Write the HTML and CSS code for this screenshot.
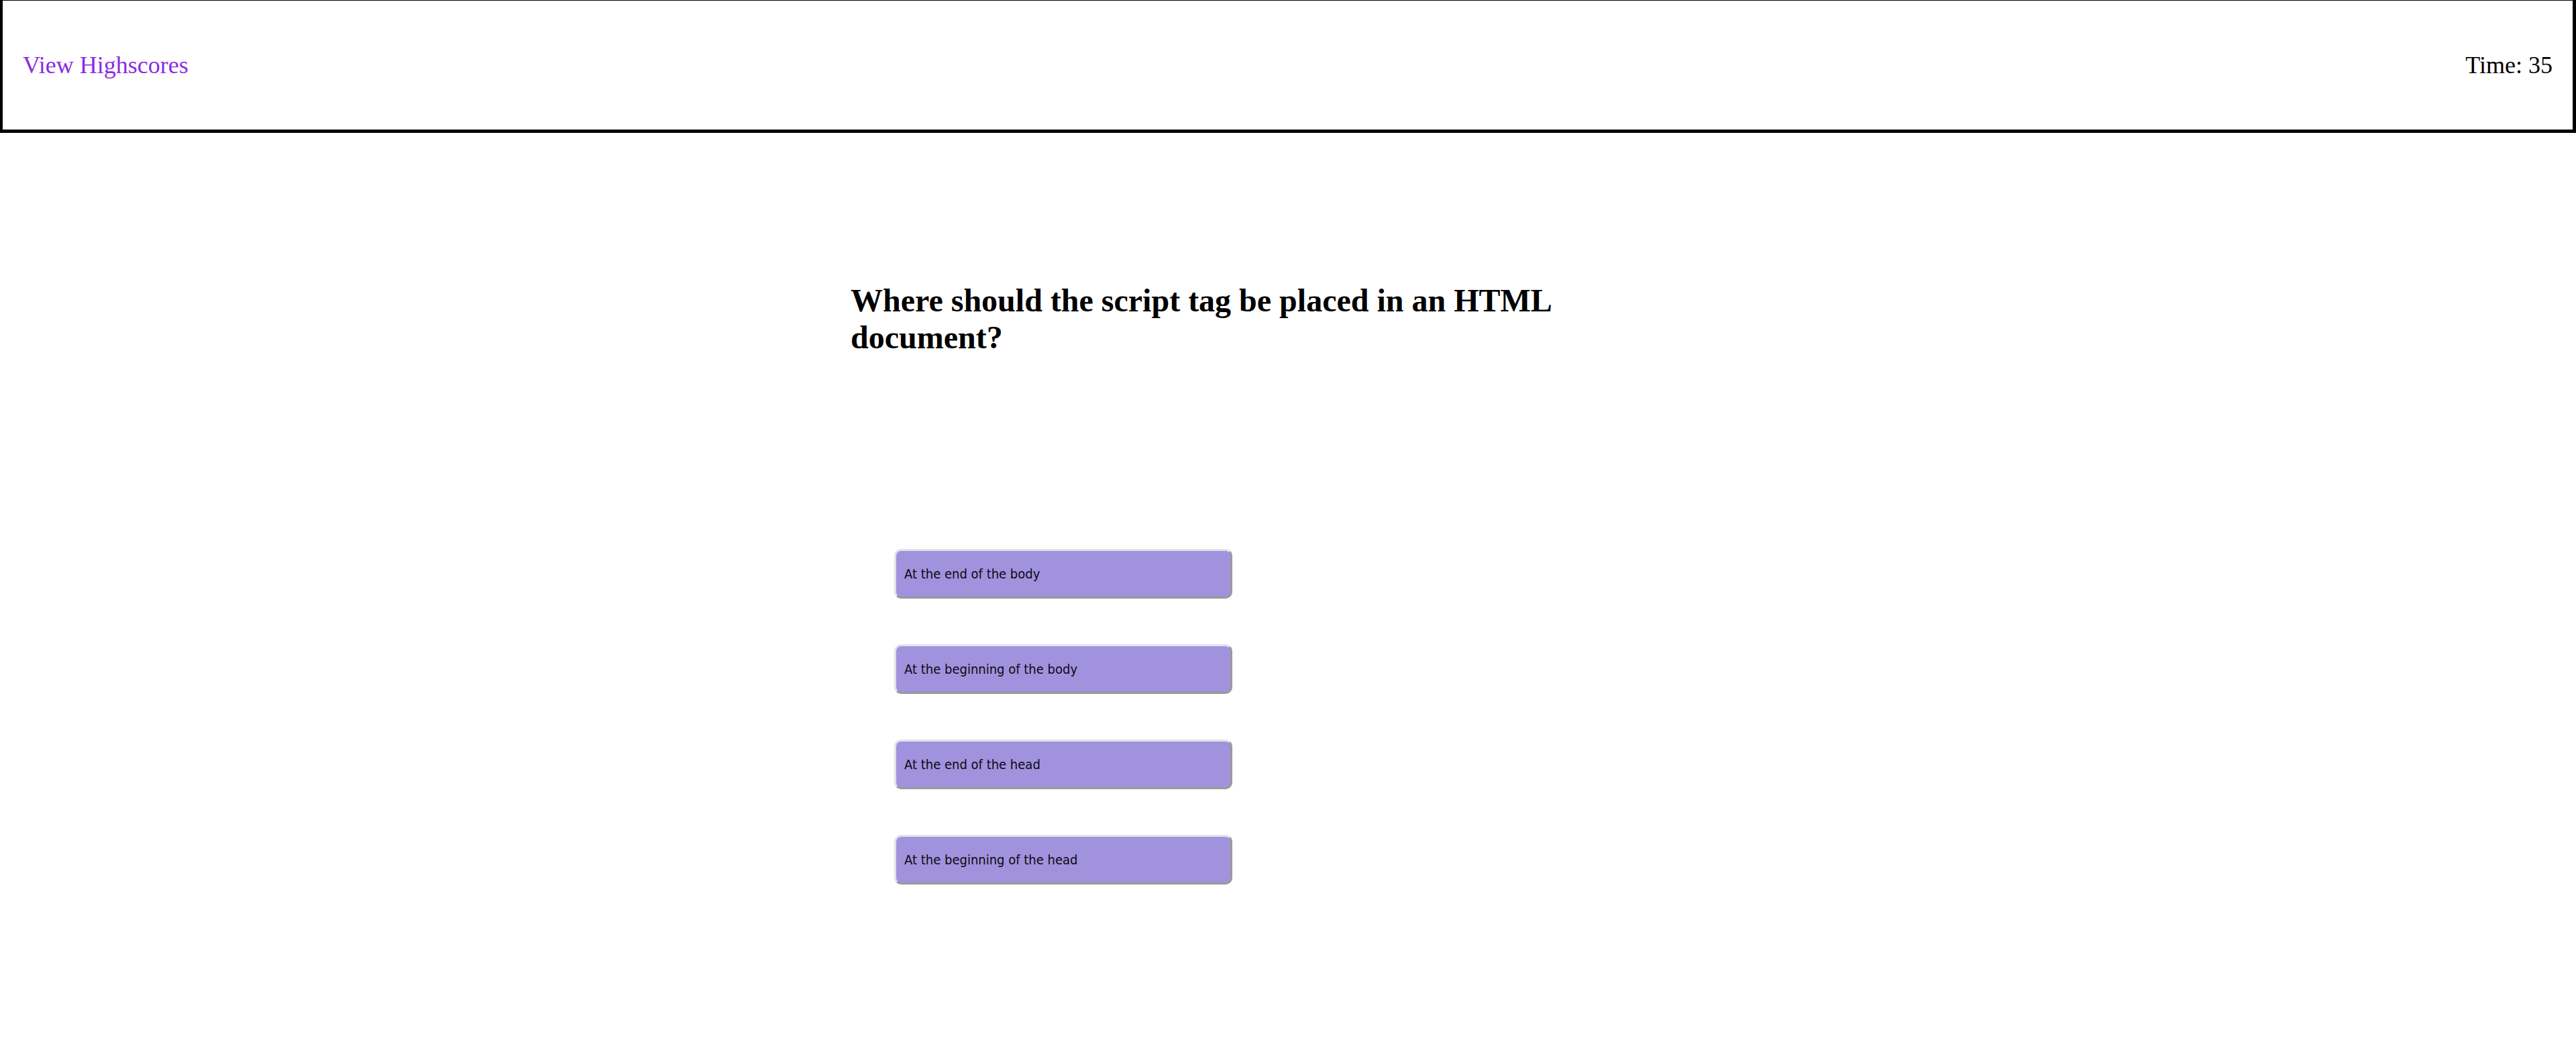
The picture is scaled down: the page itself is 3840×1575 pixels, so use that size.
FILE: index.html
```html
<!DOCTYPE html>
<html lang="en">
<head>
<meta charset="utf-8">
<title>Code Quiz</title>
<link rel="stylesheet" href="styles.css">
</head>
<body>
<header class="topbar">
  <a class="highscores" href="#">View Highscores</a>
  <div class="timer">Time: 35</div>
</header>
<main class="quiz">
  <h1 class="question">Where should the script tag be placed in an HTML document?</h1>
  <div class="choices">
    <button class="choice">At the end of the body</button>
    <button class="choice">At the beginning of the body</button>
    <button class="choice">At the end of the head</button>
    <button class="choice">At the beginning of the head</button>
  </div>
</main>
</body>
</html>
```
FILE: styles.css
```css
html, body {
  margin: 0;
  padding: 0;
  background: #fff;
  font-family: "Liberation Serif", "Times New Roman", serif;
  color: #000;
}

.topbar {
  display: flex;
  justify-content: space-between;
  align-items: center;
  padding: 75px 30px;
  border: 4px solid #000;
  border-top-width: 1px;
  border-bottom-width: 5px;
  border-right-width: 5px;
  font-size: 36px;
}

.highscores {
  color: #8a2be2;
  text-decoration: none;
}

.timer {
  color: #000;
}

.quiz {
  width: 1304px;
  margin: 0 auto;
  padding-top: 222px;
}

.question {
  max-width: 1100px;
  margin: 0;
  font-size: 48px;
  font-weight: bold;
}

.choices {
  display: flex;
  flex-direction: column;
  align-items: flex-start;
  gap: 68px;
  margin-top: 288px;
  padding-left: 65px;
}

.choice {
  box-sizing: border-box;
  width: 504px;
  height: 74px;
  padding: 0 12px;
  text-align: left;
  background: #a192dd;
  border: 3px solid;
  border-color: #e2e0ea #9a9a9a #9a9a9a #e2e0ea;
  border-radius: 10px;
  font-family: "DejaVu Sans Condensed", "DejaVu Sans", sans-serif;
  font-stretch: condensed;
  font-size: 20px;
  color: #0a0a14;
}
```
